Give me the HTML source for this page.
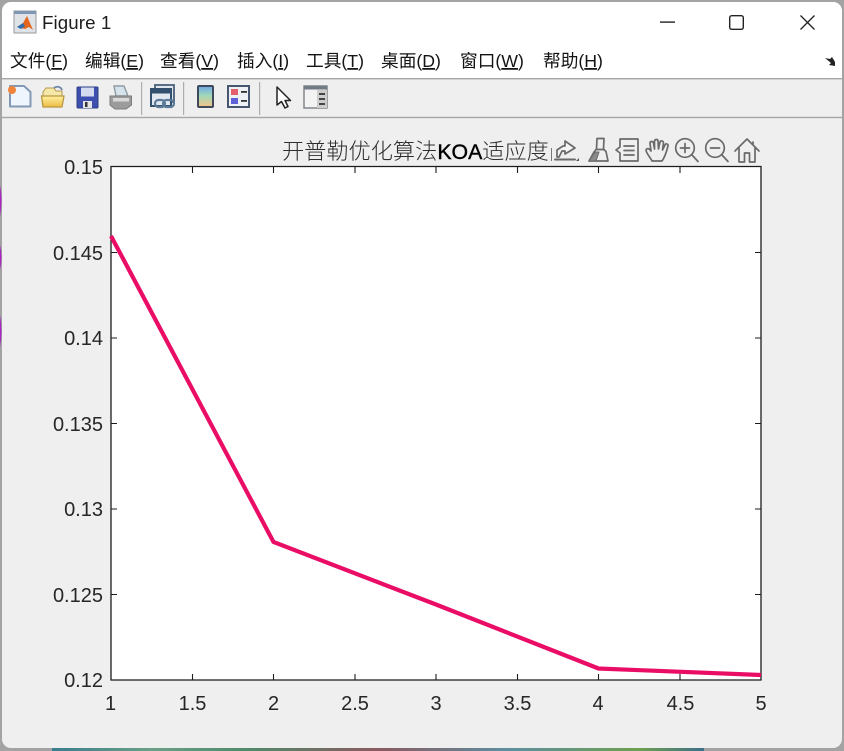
<!DOCTYPE html>
<html><head><meta charset="utf-8"><style>
html,body{margin:0;padding:0;background:#8f8f8f}
svg{display:block;filter:blur(.3px)}
text{font-family:"Liberation Sans","Noto Sans CJK SC",sans-serif}
.t{font-size:20px;fill:#262626}
.m{font-size:17.7px;fill:#141414}
.ic{fill:none;stroke:#6a6a6a;stroke-width:1.7;stroke-linejoin:round;stroke-linecap:round}
</style></head><body>
<svg width="844" height="751" viewBox="0 0 844 751" xmlns="http://www.w3.org/2000/svg">
<defs>
<linearGradient id="pa" x1="0" y1="0" x2="0" y2="1"><stop offset="0" stop-color="#6fa8e8"/><stop offset=".45" stop-color="#9ed8b8"/><stop offset="1" stop-color="#f6c488"/></linearGradient>
<linearGradient id="fo" x1="0" y1="0" x2="0" y2="1"><stop offset="0" stop-color="#fff0a0"/><stop offset="1" stop-color="#ecbc44"/></linearGradient>
<linearGradient id="strip" x1="0" y1="0" x2="1" y2="0"><stop offset="0" stop-color="#3a7d8c"/><stop offset=".15" stop-color="#6aa088"/><stop offset=".3" stop-color="#4f8a6a"/><stop offset=".5" stop-color="#8a5a60"/><stop offset=".7" stop-color="#5d8fa0"/><stop offset=".9" stop-color="#6da050"/><stop offset="1" stop-color="#3d6f88"/></linearGradient>
</defs>
<rect width="844" height="751" fill="#a3a3a3"/>
<rect x="52" y="747" width="652" height="4" fill="url(#strip)"/>
<rect x="2" y="2" width="840" height="746" rx="9" fill="#efefef"/>
<path d="M2 78V11a9 9 0 0 1 9-9H833a9 9 0 0 1 9 9V78Z" fill="#fff"/>
<path d="M0 185Q3 200 0 217Z" fill="#a828c0"/>
<path d="M0 245Q3 257 0 270Z" fill="#a828c0"/>
<path d="M0 315Q3 331 0 347Z" fill="#a828c0"/>
<rect x="2" y="78" width="840" height="1.4" fill="#a6a6a6"/>
<rect x="2" y="116.8" width="840" height="1.4" fill="#a6a6a6"/>

<!-- title icon -->
<rect x="14" y="11" width="22" height="22" fill="#dfe3e8" stroke="#9a9a9a"/>
<rect x="14" y="11" width="22" height="3" fill="#7f97b5"/>
<path d="M17 27L23 23L27 16L33 30L29 27L25 29Z" fill="#e2661c"/>
<path d="M17 27L23 23L25 26L21 29Z" fill="#2f6fb0"/>
<text x="42" y="29" font-size="18.7" letter-spacing=".1" fill="#1c1c1c">Figure 1</text>

<!-- window buttons -->
<rect x="660" y="21.4" width="15" height="1.4" fill="#222"/>
<rect x="729.7" y="15.7" width="13.6" height="13.6" rx="2" fill="none" stroke="#222" stroke-width="1.4"/>
<path d="M800.5 15.5L814.5 29.5M814.5 15.5L800.5 29.5" stroke="#222" stroke-width="1.3" fill="none"/>

<!-- menus -->
<text class="m" x="10" y="67">文件(<tspan text-decoration="underline">F</tspan>)</text>
<text class="m" x="85" y="67">编辑(<tspan text-decoration="underline">E</tspan>)</text>
<text class="m" x="160" y="67">查看(<tspan text-decoration="underline">V</tspan>)</text>
<text class="m" x="237" y="67">插入(<tspan text-decoration="underline">I</tspan>)</text>
<text class="m" x="306" y="67">工具(<tspan text-decoration="underline">T</tspan>)</text>
<text class="m" x="381" y="67">桌面(<tspan text-decoration="underline">D</tspan>)</text>
<text class="m" x="460" y="67">窗口(<tspan text-decoration="underline">W</tspan>)</text>
<text class="m" x="543" y="67">帮助(<tspan text-decoration="underline">H</tspan>)</text>
<path d="M825 58L830 59L832 57L835 62V66L829 65L831 63Z" fill="#222"/>

<!-- toolbar: new -->
<path d="M10 86H24L30.5 92V106.500H10Z" fill="#eef5fc" stroke="#8398b4" stroke-width="2" stroke-linejoin="round"/>
<circle cx="12" cy="90" r="4" fill="#f0843a"/>
<!-- open -->
<path d="M43 92L46 88H54L56 91H62V96H43Z" fill="#f4e7a8" stroke="#b59a50"/>
<path d="M41.500 96H64L62 107H43Z" fill="url(#fo)" stroke="#b8983e" stroke-width="1.3"/>
<path d="M54 88A5 5 0 0 1 62 90" fill="none" stroke="#6d88a8" stroke-width="1.8"/>
<!-- save -->
<rect x="77" y="87" width="21" height="21" rx="1" fill="#3d4fae" stroke="#2e3c85"/>
<rect x="81" y="87.5" width="13" height="9" fill="#d4daf0"/>
<rect x="83" y="101" width="9" height="7" fill="#e4e4e4"/>
<rect x="85" y="102" width="2.5" height="5" fill="#333"/>
<!-- print -->
<path d="M114 86H124L128 96H116Z" fill="#d6e3ec" stroke="#8f9ba3" stroke-width="1.4"/>
<path d="M110 96H131.500V105L126 109H115L110 105Z" fill="#9c9c9c" stroke="#7c7c7c"/>
<rect x="113" y="98" width="16" height="3.500" fill="#d9d9d9"/>
<rect x="141" y="82" width="1.2" height="33" fill="#adadad"/>
<!-- link -->
<rect x="155" y="85" width="19" height="17" fill="#dfe6ee" stroke="#4b6079" stroke-width="1.8"/>
<rect x="151" y="89" width="20" height="17" fill="#e3e9f0" stroke="#34506f" stroke-width="2"/>
<rect x="151" y="89" width="20" height="4.500" fill="#34506f"/>
<rect x="155" y="100" width="10" height="7" rx="3.500" fill="none" stroke="#5a7a98" stroke-width="2.2"/>
<rect x="163" y="100" width="11" height="7" rx="3.500" fill="none" stroke="#5a7a98" stroke-width="2.2"/>
<rect x="183" y="82" width="1.2" height="33" fill="#adadad"/>
<!-- colorbar -->
<rect x="198" y="86" width="15" height="21" rx="1" fill="url(#pa)" stroke="#3f4a5c" stroke-width="2"/>
<!-- legend -->
<rect x="228" y="86" width="21" height="21" fill="#eef1f5" stroke="#46566e" stroke-width="2"/>
<rect x="231" y="89" width="7" height="6" fill="#e0606c"/>
<rect x="231" y="98" width="7" height="6" fill="#5f5fd8"/>
<rect x="241" y="91" width="6" height="1.8" fill="#333"/>
<rect x="241" y="100" width="6" height="1.8" fill="#333"/>
<rect x="259" y="82" width="1.2" height="33" fill="#adadad"/>
<!-- pointer -->
<path d="M277 87V105L281.5 101.500L285 108L288 106.500L285 100.500H290.5Z" fill="#fff" stroke="#222" stroke-width="1.5" stroke-linejoin="round"/>
<!-- plot tools -->
<rect x="304" y="86" width="23" height="22" fill="#f3f3f3" stroke="#7b8085" stroke-width="1.4"/>
<rect x="304" y="86" width="23" height="3.500" fill="#707b86"/>
<rect x="317" y="90" width="10" height="18" fill="#cdcdcd"/>
<path d="M319 94H325M319 99H325M319 104H325" stroke="#333" stroke-width="1.7"/>

<!-- axes -->
<rect x="111" y="166.5" width="650" height="513.5" fill="#fff"/>
<path d="M111 166.500H761V680H111Z" fill="none" stroke="#1c1c1c" stroke-width="1.3"/>
<path d="M192.5 167v6M273.5 167v6M355 167v6M436 167v6M517.5 167v6M598.5 167v6M680 167v6M192.5 680v-6M273.5 680v-6M355 680v-6M436 680v-6M517.5 680v-6M598.5 680v-6M680 680v-6M111 252.5h6M111 338h6M111 423.5h6M111 509h6M111 594.5h6M761 252.5h-6M761 338h-6M761 423.5h-6M761 509h-6M761 594.5h-6" stroke="#1c1c1c" stroke-width="1.1"/>
<path d="M111 236L273.5 542L436 604.5L598.5 668.5L761 675" fill="none" stroke="#ea0d66" stroke-width="4.2" stroke-linejoin="miter"/>

<!-- y labels -->
<g text-anchor="end">
<text class="t" x="103" y="174">0.15</text>
<text class="t" x="103" y="260">0.145</text>
<text class="t" x="103" y="345">0.14</text>
<text class="t" x="103" y="431">0.135</text>
<text class="t" x="103" y="516">0.13</text>
<text class="t" x="103" y="602">0.125</text>
<text class="t" x="103" y="687">0.12</text>
</g>
<g text-anchor="middle">
<text class="t" x="110.5" y="710">1</text>
<text class="t" x="192.5" y="710">1.5</text>
<text class="t" x="273.5" y="710">2</text>
<text class="t" x="355" y="710">2.5</text>
<text class="t" x="436" y="710">3</text>
<text class="t" x="517.5" y="710">3.5</text>
<text class="t" x="598" y="710">4</text>
<text class="t" x="680.5" y="710">4.5</text>
<text class="t" x="761" y="710">5</text>
</g>

<!-- title -->
<text x="282" y="159" font-size="22.2" font-weight="300" fill="#2e2e2e">开普勒优化算法<tspan fill="#000" font-size="21.3" stroke="#000" stroke-width=".4">KOA</tspan>适应度</text>
<rect x="551" y="148" width="1" height="13" fill="#777"/>

<!-- axes toolbar icons -->
<g class="ic">
<path d="M557 157V150L563 146H565V141L575 148L565 154V151H562L559 157Z" fill="#f4f4f4"/>
<path d="M555 159.500H575" stroke-width="2"/>
<path d="M576 161H579V158Z" fill="#555" stroke="none"/>
<path d="M597 138.500H604L603.500 149L606 151.500L608 161H589L594 152L596.500 149Z"/>
<path d="M596 149.500H604" />
<path d="M589 161L595 152L599 152L596 161Z" fill="#8a8a8a" stroke-width="1"/>
<path d="M620 139H638V161H620V153L616 150L620 147Z"/>
<path d="M624 146H634M624 150.500H634M624 155H634"/>
<path d="M652 161C650 157 646 153 646 150C647 148 649 148 651 151L650 143C650 141 653 141 653.5 143L654.5 149L654.5 141C655 139 658 139 658 141L658.5 149L660 142C661 140 663.5 141 663.5 143L662.5 150L665 145C666 143 668.5 144 668 146C666.5 152 665 157 662 161Z"/>
<circle cx="685" cy="148" r="9.3"/>
<path d="M692 155L698 161.5M680.5 148H689.5M685 143.5V152.5"/>
<circle cx="715" cy="148" r="9.3"/>
<path d="M722 155L728 161.5M710.5 148H719.5"/>
<path d="M735 151L747 139L759 151M739 148V162H744.5V153H749.5V162H755V148M753 142V145"/>
</g>
</svg>
</body></html>
